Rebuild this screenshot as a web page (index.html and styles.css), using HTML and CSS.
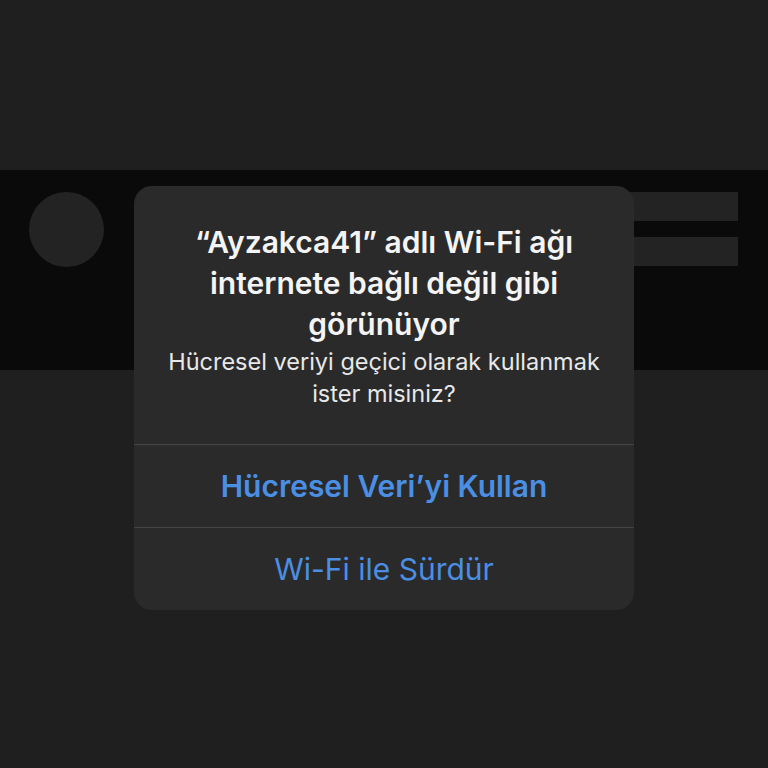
FILE: index.html
```html
<!DOCTYPE html>
<html lang="tr">
<head>
<meta charset="utf-8">
<link rel="stylesheet" href="styles.css">
</head>
<body>
<div class="page">
  <div class="top"></div>
  <div class="band">
    <div class="avatar"></div>
    <div class="bars">
      <div class="bar"></div>
      <div class="bar"></div>
    </div>
  </div>
  <div class="bottom"></div>

  <div class="alert">
    <div class="alert-body">
      <div class="title">“Ayzakca41” adlı Wi-Fi ağı internete bağlı değil gibi görünüyor</div>
      <div class="message">Hücresel veriyi geçici olarak kullanmak ister misiniz?</div>
    </div>
    <div class="action primary">Hücresel Veri’yi Kullan</div>
    <div class="action">Wi-Fi ile Sürdür</div>
  </div>
</div>
</body>
</html>
```
FILE: styles.css
```css
html, body {
  margin: 0;
  padding: 0;
  background: #1f1f1f;
}
.page {
  position: relative;
  width: 768px;
  height: 768px;
  overflow: hidden;
  background: #1f1f1f;
  font-family: Inter, "Noto Sans", "DejaVu Sans", sans-serif;
  display: flex;
  flex-direction: column;
}
.top {
  height: 170px;
  background: #1f1f1f;
}
.band {
  height: 200px;
  background: #0a0a0a;
  display: flex;
  align-items: flex-start;
  padding: 22px 30px 0 29px;
  box-sizing: border-box;
}
.avatar {
  width: 75px;
  height: 75px;
  border-radius: 50%;
  background: #232323;
}
.bars {
  margin-left: auto;
  display: flex;
  flex-direction: column;
  gap: 16px;
}
.bar {
  width: 128px;
  height: 29px;
  background: #232323;
}
.bottom {
  flex: 1;
  background: #1f1f1f;
}
.alert {
  position: absolute;
  left: 134px;
  top: 186px;
  width: 500px;
  border-radius: 18px;
  background: #2a2a2a;
  overflow: hidden;
  color: #f2f2f2;
  text-align: center;
}
.alert-body {
  padding: 36px 28px 34px;
}
.title {
  font-size: 30px;
  font-weight: 600;
  line-height: 41px;
  padding: 0 14px;
  color: #f4f4f4;
}
.message {
  font-size: 23.5px;
  line-height: 32px;
  margin-top: 1px;
  color: #e8e8e8;
}
.action {
  border-top: 1px solid #454545;
  height: 82px;
  display: flex;
  align-items: center;
  justify-content: center;
  font-size: 30px;
  color: #4a8fe3;
}
.action.primary {
  font-weight: 600;
}
```
